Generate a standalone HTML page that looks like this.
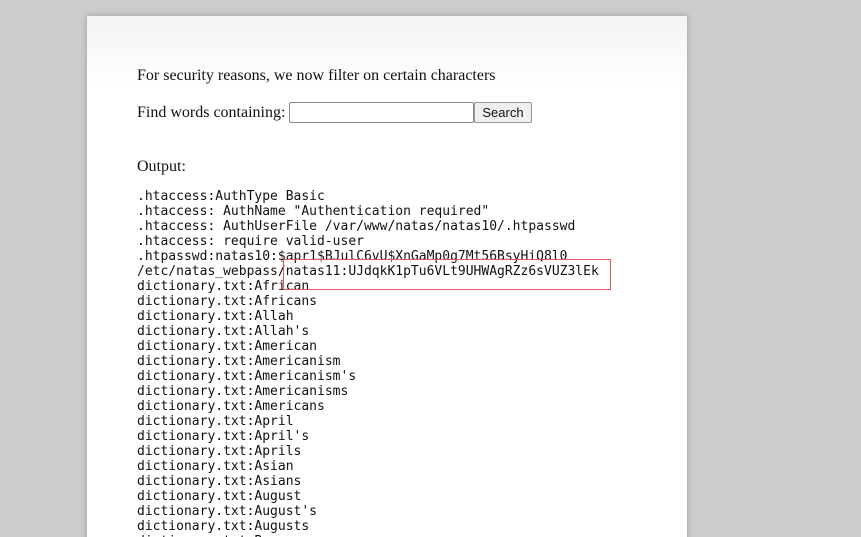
<!DOCTYPE html>
<html><head><style>
html,body{margin:0;padding:0;background:#ccc;width:861px;height:537px;overflow:hidden}
.wrap{position:relative;width:861px;height:537px;overflow:hidden}
.box{position:absolute;left:87px;top:16px;width:600px;height:540px;background:linear-gradient(#f3f3f3,#fff 70px);box-shadow:0 0 6px rgba(0,0,0,.25)}
.t{position:absolute;left:137px;font:16px "Liberation Serif",serif;color:#111;white-space:nowrap}
pre{position:absolute;left:137px;top:189px;margin:0;font:13px/15px "DejaVu Sans Mono",monospace;color:#111}
input{position:absolute;left:289px;top:102px;width:185px;height:21px;box-sizing:border-box;border:1px solid #888;border-radius:2px;background:#fff;margin:0}
.btn{position:absolute;left:474px;top:102px;width:58px;height:21px;box-sizing:border-box;border:1px solid #999;border-radius:2px;background:#efefef;font:13px "Liberation Sans",sans-serif;text-align:center;line-height:19px;color:#111}
.red{position:absolute;left:283px;top:259px;width:326px;height:29px;border:1.5px solid #e05a5a}
</style></head><body><div class="wrap">
<div class="box"></div>
<div class="t" style="top:67px">For security reasons, we now filter on certain characters</div>
<div class="t" style="top:104px">Find words containing:</div>
<input type="text"><div class="btn">Search</div>
<div class="t" style="top:158px">Output:</div>
<pre>.htaccess:AuthType Basic
.htaccess: AuthName "Authentication required"
.htaccess: AuthUserFile /var/www/natas/natas10/.htpasswd
.htaccess: require valid-user
.htpasswd:natas10:$apr1$BJulC6vU$XnGaMp0g7Mt56BsyHiQ8l0
/etc/natas_webpass/natas11:UJdqkK1pTu6VLt9UHWAgRZz6sVUZ3lEk
dictionary.txt:African
dictionary.txt:Africans
dictionary.txt:Allah
dictionary.txt:Allah's
dictionary.txt:American
dictionary.txt:Americanism
dictionary.txt:Americanism's
dictionary.txt:Americanisms
dictionary.txt:Americans
dictionary.txt:April
dictionary.txt:April's
dictionary.txt:Aprils
dictionary.txt:Asian
dictionary.txt:Asians
dictionary.txt:August
dictionary.txt:August's
dictionary.txt:Augusts
dictionary.txt:Ba</pre>
<div class="red"></div>
</div></body></html>
